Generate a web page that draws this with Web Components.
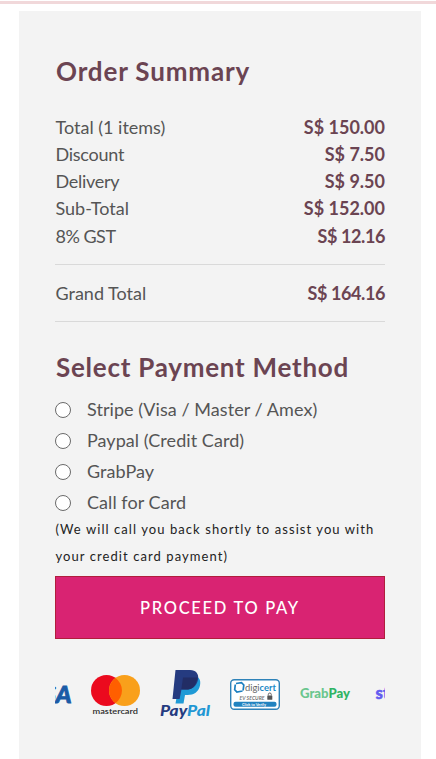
<!DOCTYPE html>
<html lang="en">
<head>
<meta charset="utf-8">
<title>Order Summary</title>
<style>
  body {
    margin: 0;
    background: #fff;
    font-family: Lato, "Open Sans", sans-serif;
    overflow: hidden;
  }
</style>
</head>
<body>
<checkout-panel></checkout-panel>

<script>
class SummaryRow extends HTMLElement {
    constructor() {
        super();
        this.attachShadow({ mode: 'open' });
        this.shadowRoot.innerHTML = `
      <style>
        :host {
          display: flex;
          justify-content: space-between;
          font-size: 18px;
          line-height: 27.2px;
          color: #555;
          white-space: nowrap;
        }
        .label { padding-left: 0.5px; letter-spacing: var(--label-spacing, 0); }
        .amount {
          color: #6b4452;
          font-weight: 700;
          letter-spacing: var(--amount-spacing, 0);
        }
      </style>
      <span class="label"><slot></slot></span>
      <span class="amount"><slot name="amount"></slot></span>
    `;
    }
}
customElements.define('summary-row', SummaryRow);

class PaymentOption extends HTMLElement {
    constructor() {
        super();
        this.attachShadow({ mode: 'open' });
        this.shadowRoot.innerHTML = `
      <style>
        :host { display: block; height: 31px; }
        label {
          display: flex;
          align-items: center;
          gap: 16px;
          height: 31px;
          font-size: 18px;
          color: #555;
          white-space: nowrap;
          letter-spacing: 0.06px;
        }
        span { padding-bottom: 2px; }
        input {
          appearance: none;
          box-sizing: border-box;
          flex: none;
          width: 16px;
          height: 16px;
          margin: 0;
          border: 1px solid #6a6a6a;
          border-radius: 50%;
          background: #fff;
        }
        input:checked { border: 5px solid #d92372; }
      </style>
      <label><input type="radio"><span><slot></slot></span></label>
    `;
    }
}
customElements.define('payment-option', PaymentOption);

class PayButton extends HTMLElement {
    constructor() {
        super();
        this.attachShadow({ mode: 'open' });
        this.shadowRoot.innerHTML = `
      <style>
        :host { display: block; }
        button {
          display: block;
          box-sizing: border-box;
          width: 100%;
          height: 63px;
          padding: 1px 0 0;
          border: 1px solid #b01e3c;
          background: #d92372;
          color: #fff;
          font: 500 16.5px Lato, sans-serif;
          letter-spacing: 1.7px;
          cursor: pointer;
        }
      </style>
      <button><slot></slot></button>
    `;
    }
}
customElements.define('pay-button', PayButton);

class PaymentLogos extends HTMLElement {
    constructor() {
        super();
        this.attachShadow({ mode: 'open' });
        this.shadowRoot.innerHTML = `
      <style>
        :host {
          display: flex;
          gap: 20px;
          overflow: hidden;
          height: 52px;
        }
        svg { flex: none; width: 50px; height: 52px; overflow: visible; }
        svg:first-of-type { margin-left: -35px; }
        text { font-family: Lato, sans-serif; }
      </style>
      <svg viewBox="0 0 50 52">
        <text x="0" y="33.500" font-size="23" font-weight="900" font-style="italic" fill="#1a5ba6" stroke="#1a5ba6" stroke-width=".8" textLength="51.500" lengthAdjust="spacingAndGlyphs">VISA</text>
      </svg>
      <svg viewBox="0 0 50 52">
        <circle cx="16.5" cy="21.5" r="15.5" fill="#eb0a1e"/>
        <circle cx="34.5" cy="21.5" r="15.5" fill="#f9a01b"/>
        <path d="M25.5 8.9a15.5 15.5 0 0 1 0 25.2a15.5 15.5 0 0 1 0-25.2z" fill="#ff5f00"/>
        <text x="2.5" y="44.5" font-size="8.4" font-weight="600" fill="#2b2b2b" textLength="45.5" lengthAdjust="spacingAndGlyphs">mastercard</text>
      </svg>
      <svg viewBox="0 0 50 52">
        <path d="M20.5 6H33c5.5 1 8.3 4.500 7 10.500C38.600 23 34 26 27.500 26H25l-1.500 8.500H15.500z" fill="#1f9ad6"/>
        <path d="M15.500 1h14.500c6 0 9.200 4 8 9.800C36.700 17.500 32 20.600 25.500 20.600h-4L19.600 30H12.500z" fill="#253b80"/>
        <path d="M23 8.500h14.500c-1.800 9-5.500 12.100-11 12.100h-5.200z" fill="#222d65"/>
        <text x="0" y="46.500" font-size="15.500" font-weight="900" font-style="italic" textLength="50" lengthAdjust="spacingAndGlyphs"><tspan fill="#253b80">Pay</tspan><tspan fill="#2297d4">Pal</tspan></text>
      </svg>
      <svg viewBox="0 0 50 52">
        <rect x="0.700" y="10.800" width="48.600" height="29.400" rx="3.500" fill="#fff" stroke="#2e82b8" stroke-width="1.400"/>
        <path d="M6 14.500l5.500-.8 2.300 2.300-.7 5.500M12.500 22l-5.600 1-2.200-2.300.6-5.200" fill="none" stroke="#1b7fc0" stroke-width="1.700"/>
        <text x="15" y="21.500" font-size="10" textLength="31" lengthAdjust="spacingAndGlyphs"><tspan fill="#666">digi</tspan><tspan fill="#1b8ac6" font-weight="700">cert</tspan></text>
        <text x="9.500" y="30.500" font-size="5.800" font-style="italic" font-weight="700" fill="#777" textLength="25" lengthAdjust="spacingAndGlyphs">EV SECURE</text>
        <rect x="37.300" y="26.500" width="5" height="4.200" rx=".5" fill="#555"/>
        <path d="M38.300 26.500v-1a1.500 1.500 0 0 1 3 0v1" fill="none" stroke="#555" stroke-width=".9"/>
        <rect x="3.500" y="32.700" width="43" height="5" rx="2" fill="#2283c0"/>
        <text x="12" y="36.900" font-size="4.400" font-weight="700" fill="#fff" textLength="24" lengthAdjust="spacingAndGlyphs">Click to Verify</text>
      </svg>
      <svg viewBox="0 0 50 52">
        <text x="0" y="28.500" font-size="13" font-weight="900" textLength="50" lengthAdjust="spacingAndGlyphs"><tspan fill="#6ac68e">Grab</tspan><tspan fill="#2fb464">Pay</tspan></text>
      </svg>
      <svg viewBox="0 0 50 52">
        <text x="5.500" y="29.500" font-size="16" font-weight="900" fill="#635bf0" stroke="#635bf0" stroke-width=".5" textLength="43" lengthAdjust="spacingAndGlyphs">stripe</text>
      </svg>
    `;
    }
}
customElements.define('payment-logos', PaymentLogos);

class CheckoutPanel extends HTMLElement {
    constructor() {
        super();
        this.attachShadow({ mode: 'open' });
        this.shadowRoot.innerHTML = `
      <style>
        :host {
          display: flex;
          flex-direction: column;
          box-sizing: border-box;
          height: 759px;
          padding-top: 1px;
        }
        .bar { flex: none; height: 3px; background: #f1d8da; }
        .panel {
          flex: 1;
          margin: 7px 15px 0 19px;
          padding: 44px 36px 0;
          background: #f3f3f3;
        }
        h2 {
          margin: 0;
          padding-left: 1px;
          font-size: 26px;
          font-weight: 700;
          line-height: 32px;
          color: #6b4452;
          letter-spacing: 0.85px;
          white-space: nowrap;
        }
        .rows { padding: 26.8px 0 14.2px; }
        .narrow { --amount-spacing: -0.4px; }
        .grand {
          padding: 15px 0 13.8px;
          border: solid #d9d9d9;
          border-width: 1px 0;
        }
        .method { margin-top: 29px; letter-spacing: 0.75px; }
        .options { margin-top: 11px; }
        p {
          margin: -2px 0 0;
          padding-left: 0.5px;
          font-size: 13px;
          line-height: 27px;
          letter-spacing: 1.07px;
          color: #222;
          white-space: nowrap;
        }
        pay-button { margin-top: 6px; }
        payment-logos { margin-top: 30px; }
      </style>
      <div class="bar"></div>
      <div class="panel">
        <h2>Order Summary</h2>
        <div class="rows">
          <summary-row>Total (1 items)<span slot="amount">S$ 150.00</span></summary-row>
          <summary-row style="--label-spacing: -0.25px">Discount<span slot="amount">S$ 7.50</span></summary-row>
          <summary-row style="--label-spacing: -0.3px">Delivery<span slot="amount">S$ 9.50</span></summary-row>
          <summary-row>Sub-Total<span slot="amount">S$ 152.00</span></summary-row>
          <summary-row class="narrow" style="--label-spacing: -0.5px">8% GST<span slot="amount">S$ 12.16</span></summary-row>
        </div>
        <div class="grand">
          <summary-row class="narrow">Grand Total<span slot="amount">S$ 164.16</span></summary-row>
        </div>
        <h2 class="method">Select Payment Method</h2>
        <div class="options">
          <payment-option>Stripe (Visa / Master / Amex)</payment-option>
          <payment-option>Paypal (Credit Card)</payment-option>
          <payment-option>GrabPay</payment-option>
          <payment-option>Call for Card</payment-option>
        </div>
        <p>(We will call you back shortly to assist you with<br>your credit card payment)</p>
        <pay-button>PROCEED TO PAY</pay-button>
        <payment-logos></payment-logos>
      </div>
    `;
    }
}
customElements.define('checkout-panel', CheckoutPanel);
</script>
</body>
</html>
